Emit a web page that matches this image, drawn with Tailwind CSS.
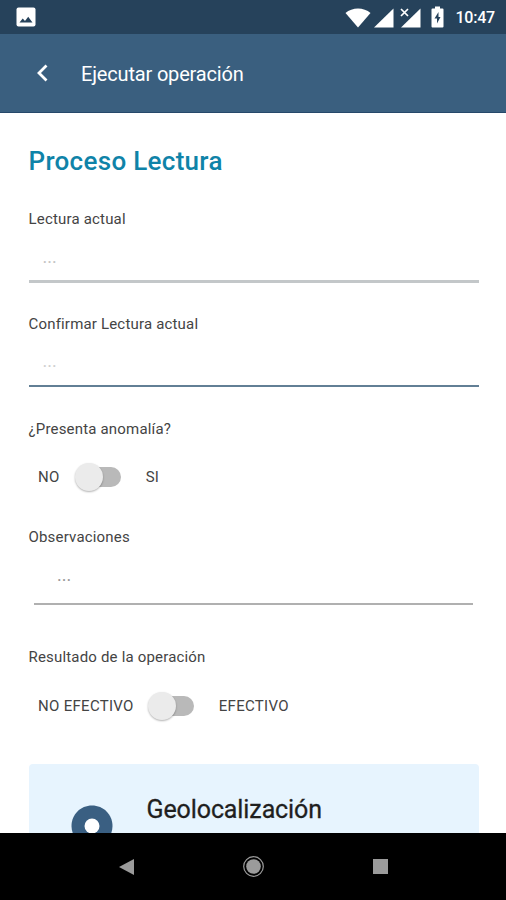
<!DOCTYPE html>
<html lang="es">
<head>
    <meta charset="UTF-8">
    <meta name="viewport" content="width=device-width, initial-scale=1.0">
    <title>Ejecutar operación</title>
    <script src="https://cdn.jsdelivr.net/npm/@tailwindcss/browser@4"></script>
</head>
<body class="bg-white font-['Roboto',sans-serif] text-[#444444]">
    <div class="w-[506px] h-[900px] flex flex-col overflow-hidden">
        <!-- Status bar -->
        <div class="h-[34px] shrink-0 bg-[#26425b] flex items-center pl-4 pr-[11px] text-white">
            <svg class="w-5 h-5" viewBox="0 0 20 20">
                <rect x="0.5" y="0.5" width="19" height="19" rx="2" fill="#fff"></rect>
                <path d="M3.500 15.500l3.200-4.100 2.300 2.600 3.200-4.300 4.300 5.800z" fill="#26425b"></path>
            </svg>
            <svg class="ml-auto w-[26px] h-5 translate-y-px" viewBox="0 0 26 20" fill="#fff">
                <path d="M0.500 5C7 -1 19 -1 25.500 5L13 19.500z"></path>
            </svg>
            <svg class="ml-[3px] w-5 h-5 translate-y-px" viewBox="0 0 20 20" fill="#fff">
                <path d="M0 19.500L19.500 0.500V19.500z"></path>
            </svg>
            <svg class="ml-[6px] w-[21px] h-5 translate-y-px" viewBox="0 0 21 20" fill="#fff">
                <path d="M1 19.500L20.500 0.500V19.500z"></path>
                <path d="M0 0H11.500V8.500L8.500 11H0z" fill="#26425b"></path>
                <path d="M1 1L8 8M8 1L1 8" stroke="#fff" stroke-width="1.700"></path>
            </svg>
            <svg class="ml-[10px] w-[13px] h-[22px]" viewBox="0 0 13 22">
                <path d="M4 0.500H9V2.500H11.500Q12.500 2.500 12.500 3.500V20.500Q12.500 21.500 11.500 21.500H1.500Q0.500 21.500 0.500 20.500V3.500Q0.500 2.500 1.500 2.500H4z" fill="#fff"></path>
                <path d="M7.500 6L3.500 12.500H6V17.500L9.500 11H7.500z" fill="#26425b"></path>
            </svg>
            <span class="ml-[11px] text-[16px] leading-5 font-medium tracking-[-0.2px] translate-y-px">10:47</span>
        </div>

        <!-- Header -->
        <header class="h-[79px] shrink-0 bg-[#3a5f7f] border-b border-[#26486a] flex items-center text-white">
            <svg class="ml-[36px] w-3 h-[18px]" viewBox="0 0 12 18" fill="none" stroke="#fff" stroke-width="2.800">
                <path d="M10.500 1.500L3 9l7.500 7.500"></path>
            </svg>
            <h1 class="ml-[33px] pt-0.5 text-[20px] leading-6 tracking-[-0.17px] whitespace-nowrap">Ejecutar operación</h1>
        </header>

        <!-- Form -->
        <main class="flex-1 min-h-0 overflow-hidden pl-[28.500px] pr-[27.500px] pt-8">
            <h2 class="text-[26px] leading-8 font-medium tracking-[0.3px] text-[#0f83a8] whitespace-nowrap">Proceso Lectura</h2>

            <label for="lectura" class="block mt-8 text-[15px] leading-5 tracking-[0.18px]">Lectura actual</label>
            <input id="lectura" type="text" placeholder="..."
                class="block w-[450px] h-[54px] px-[14px] pt-[3px] border-b-[3px] border-[#c3c7c9] text-[18px] outline-none placeholder:text-[#c4c4c4]">

            <label for="confirmar" class="block mt-[31px] text-[15px] leading-5 tracking-[0.18px]">Confirmar Lectura actual</label>
            <input id="confirmar" type="text" placeholder="..."
                class="block w-[450px] h-[53px] px-[14px] pt-px border-b-2 border-[#627f95] text-[18px] outline-none placeholder:text-[#d0d0d0]">

            <p class="mt-8 text-[15px] leading-5 tracking-[0.18px]">¿Presenta anomalía?</p>
            <div class="mt-[23px] h-[30px] flex items-center pl-[9.500px] text-[15px] tracking-[0.3px]">
                <span>NO</span>
                <button type="button" class="ml-[15px] w-[47px] h-[30px] flex items-center">
                    <span class="w-7 h-7 shrink-0 rounded-full bg-[#ebebeb] shadow-[0_1px_2px_rgba(0,0,0,0.3)] z-10"></span>
                    <span class="-ml-4 w-[34px] h-5 rounded-full bg-[#b9b9b9]"></span>
                </button>
                <span class="ml-[24px]">SI</span>
            </div>

            <label for="observaciones" class="block mt-[35px] text-[15px] leading-5 tracking-[0.18px]">Observaciones</label>
            <input id="observaciones" type="text" placeholder="..."
                class="block ml-[5.500px] w-[439px] h-[58px] px-[23px] pb-px border-b-2 border-[#b0b0b0] text-[18px] outline-none placeholder:text-[#999999]">

            <p class="mt-[42px] text-[15px] leading-5 tracking-[0.18px]">Resultado de la operación</p>
            <div class="mt-6 h-[30px] flex items-center pl-[9.500px] text-[15px] tracking-[0.3px]">
                <span>NO EFECTIVO</span>
                <button type="button" class="ml-[14px] w-[47px] h-[30px] flex items-center">
                    <span class="w-7 h-7 shrink-0 rounded-full bg-[#ebebeb] shadow-[0_1px_2px_rgba(0,0,0,0.3)] z-10"></span>
                    <span class="-ml-4 w-[34px] h-5 rounded-full bg-[#b9b9b9]"></span>
                </button>
                <span class="ml-[24px]">EFECTIVO</span>
            </div>

            <!-- Geolocation card -->
            <section class="mt-[43px] w-[450px] h-[140px] rounded bg-[#e7f4fe] flex items-start">
                <svg class="mt-[41px] ml-[42px] w-[42px] h-[60px]" viewBox="0 0 42 60">
                    <path d="M21 0.500C9.500 0.500 0.500 9.500 0.500 21C0.500 36 21 59 21 59S41.500 36 41.500 21C41.500 9.500 32.500 0.500 21 0.500z" fill="#3a5f82"></path>
                    <circle cx="21" cy="21" r="7.500" fill="#fff"></circle>
                </svg>
                <h3 class="mt-[30px] ml-[34px] text-[25px] leading-8 tracking-[-0.1px] text-[#1f1f1f] whitespace-nowrap [-webkit-text-stroke:0.3px_#1f1f1f]">Geolocalización</h3>
            </section>
        </main>

        <!-- Navigation bar -->
        <nav class="h-[67px] shrink-0 bg-black flex items-center">
            <svg class="ml-[119px] w-[15px] h-4" viewBox="0 0 15 16" fill="#9b9b9b">
                <path d="M0 8L15 0V16z"></path>
            </svg>
            <svg class="ml-[109px] w-[21px] h-[21px]" viewBox="0 0 21 21">
                <circle cx="10.500" cy="10.500" r="9.800" fill="none" stroke="#9b9b9b" stroke-width="1.200"></circle>
                <circle cx="10.500" cy="10.500" r="7.300" fill="#9b9b9b"></circle>
            </svg>
            <div class="ml-[109px] w-[15px] h-[15px] bg-[#9b9b9b]"></div>
        </nav>
    </div>
</body>
</html>
